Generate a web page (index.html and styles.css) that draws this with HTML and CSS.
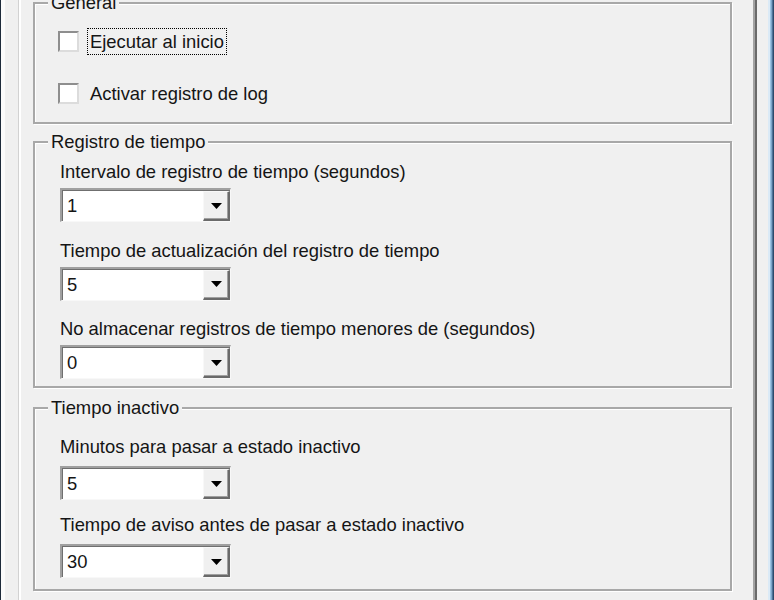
FILE: index.html
```html
<!DOCTYPE html>
<html lang="es">
<head>
<meta charset="utf-8">
<title>Opciones</title>
<link rel="stylesheet" href="styles.css">
</head>
<body>
<div class="window">
  <div class="frame-left"></div>
  <div class="side-left"></div>
  <div class="tabpage">
    <fieldset class="group group-general">
      <legend>General</legend>
      <div class="group-body">
        <div class="check-row">
          <span class="check"></span>
          <span class="check-label focused">Ejecutar al inicio</span>
        </div>
        <div class="check-row">
          <span class="check"></span>
          <span class="check-label">Activar registro de log</span>
        </div>
      </div>
    </fieldset>

    <fieldset class="group group-time">
      <legend>Registro de tiempo</legend>
      <div class="group-body">
        <div class="field">
          <div class="field-label">Intervalo de registro de tiempo (segundos)</div>
          <div class="combo"><div class="combo-inner"><span class="combo-value">1</span><span class="combo-btn"><svg width="11" height="6" viewBox="0 0 11 6"><path d="M0 0H11L5.5 6Z"/></svg></span></div></div>
        </div>
        <div class="field">
          <div class="field-label">Tiempo de actualización del registro de tiempo</div>
          <div class="combo"><div class="combo-inner"><span class="combo-value">5</span><span class="combo-btn"><svg width="11" height="6" viewBox="0 0 11 6"><path d="M0 0H11L5.5 6Z"/></svg></span></div></div>
        </div>
        <div class="field">
          <div class="field-label">No almacenar registros de tiempo menores de (segundos)</div>
          <div class="combo"><div class="combo-inner"><span class="combo-value">0</span><span class="combo-btn"><svg width="11" height="6" viewBox="0 0 11 6"><path d="M0 0H11L5.5 6Z"/></svg></span></div></div>
        </div>
      </div>
    </fieldset>

    <fieldset class="group group-idle">
      <legend>Tiempo inactivo</legend>
      <div class="group-body">
        <div class="field">
          <div class="field-label">Minutos para pasar a estado inactivo</div>
          <div class="combo"><div class="combo-inner"><span class="combo-value">5</span><span class="combo-btn"><svg width="11" height="6" viewBox="0 0 11 6"><path d="M0 0H11L5.5 6Z"/></svg></span></div></div>
        </div>
        <div class="field">
          <div class="field-label">Tiempo de aviso antes de pasar a estado inactivo</div>
          <div class="combo"><div class="combo-inner"><span class="combo-value">30</span><span class="combo-btn"><svg width="11" height="6" viewBox="0 0 11 6"><path d="M0 0H11L5.5 6Z"/></svg></span></div></div>
        </div>
      </div>
    </fieldset>
  </div>
  <div class="side-right"></div>
  <div class="frame-right"></div>
</div>
</body>
</html>
```

FILE: styles.css
```css
html, body {
  margin: 0;
  padding: 0;
  background: #f0f0f0;
}

body {
  font-family: "Liberation Sans", Arial, sans-serif;
  font-size: 18.4px;
  line-height: 21px;
  color: #151515;
}

.window {
  display: flex;
  height: 600px;
  overflow: hidden;
  background: #f0f0f0;
}

.frame-left {
  flex: none;
  width: 1px;
  background: #1d2a3a;
}

.side-left {
  flex: none;
  width: 17px;
  background: linear-gradient(to right, #fbfbfb 0 4px, #f0f0f0 4px);
}

.tabpage {
  flex: none;
  width: 739px;
  box-sizing: border-box;
  border-left: 1px solid #d2d2d2;
  border-right: 2px solid #6a6a6a;
  box-shadow: inset 2px 0 0 #ffffff, inset -2px 0 0 #a3a3a3;
  padding: 0 23px 0 14px;
}

.side-right {
  flex: none;
  width: 11px;
}

.frame-right {
  flex: none;
  width: 6px;
  background: linear-gradient(to right, #dbeaf6 0 2px, #9cc4e4 2px 3px, #5f88ae 4px, #1b3756);
}

/* group boxes */
.group {
  margin: 0;
  padding: 0;
  min-width: 0;
  border: 2px solid #a8a8a8;
  box-shadow: 1px 1px 0 #ffffff, inset 1px 1px 0 #ffffff;
}

.group legend {
  margin-left: 13px;
  padding: 0 3px;
  background: #f0f0f0;
  line-height: 21px;
}

.group-general {
  margin-top: -8px;
}

.group-general .group-body {
  padding: 15px 0 15px 23px;
  display: flex;
  flex-direction: column;
  gap: 25px;
}

.group-time {
  margin-top: 7px;
}

.group-time .group-body {
  padding: 9px 0 7px 25px;
  display: flex;
  flex-direction: column;
  gap: 17.5px;
}

.group-time .field-label {
  margin-bottom: 6px;
}

.group-idle {
  margin-top: 9px;
}

.group-idle .group-body {
  padding: 18px 0 11px 25px;
  display: flex;
  flex-direction: column;
  gap: 14px;
}

.group-idle .field-label {
  margin-bottom: 9px;
}

/* checkboxes */
.check-row {
  display: flex;
  align-items: center;
  gap: 8px;
  height: 27px;
}

.check {
  flex: none;
  width: 21px;
  height: 21px;
  box-sizing: border-box;
  background: #ffffff;
  border-style: solid;
  border-width: 2px;
  border-color: #8e8e8e #dcdcdc #dcdcdc #8e8e8e;
}

.check-label {
  border: 1px solid transparent;
  padding: 1px 2px;
  line-height: 23px;
}

.check-label.focused {
  border: 1px dotted #000000;
}

/* combo boxes */
.field-label {
  white-space: nowrap;
}

.combo {
  width: 171px;
  height: 34px;
  box-sizing: border-box;
  border-style: solid;
  border-width: 2px 1px 1px 2px;
  border-color: #a0a0a0 #f8f8f8 #f8f8f8 #a0a0a0;
  background: #ffffff;
}

.combo-inner {
  display: flex;
  height: 100%;
  box-sizing: border-box;
  border-top: 1px solid #6f6f6f;
  border-left: 1px solid #6f6f6f;
}

.combo-value {
  flex: 1;
  padding-left: 4px;
  line-height: 30px;
}

.combo-btn {
  flex: none;
  width: 27px;
  display: flex;
  align-items: center;
  justify-content: center;
  box-sizing: border-box;
  background: #f0f0f0;
  border-style: solid;
  border-width: 1px 2px 2px 1px;
  border-color: #f8f8f8 #6a6a6a #6a6a6a #f8f8f8;
  box-shadow: inset -1px -1px 0 #a0a0a0;
}

.combo-btn svg {
  display: block;
  fill: #000000;
}
```
